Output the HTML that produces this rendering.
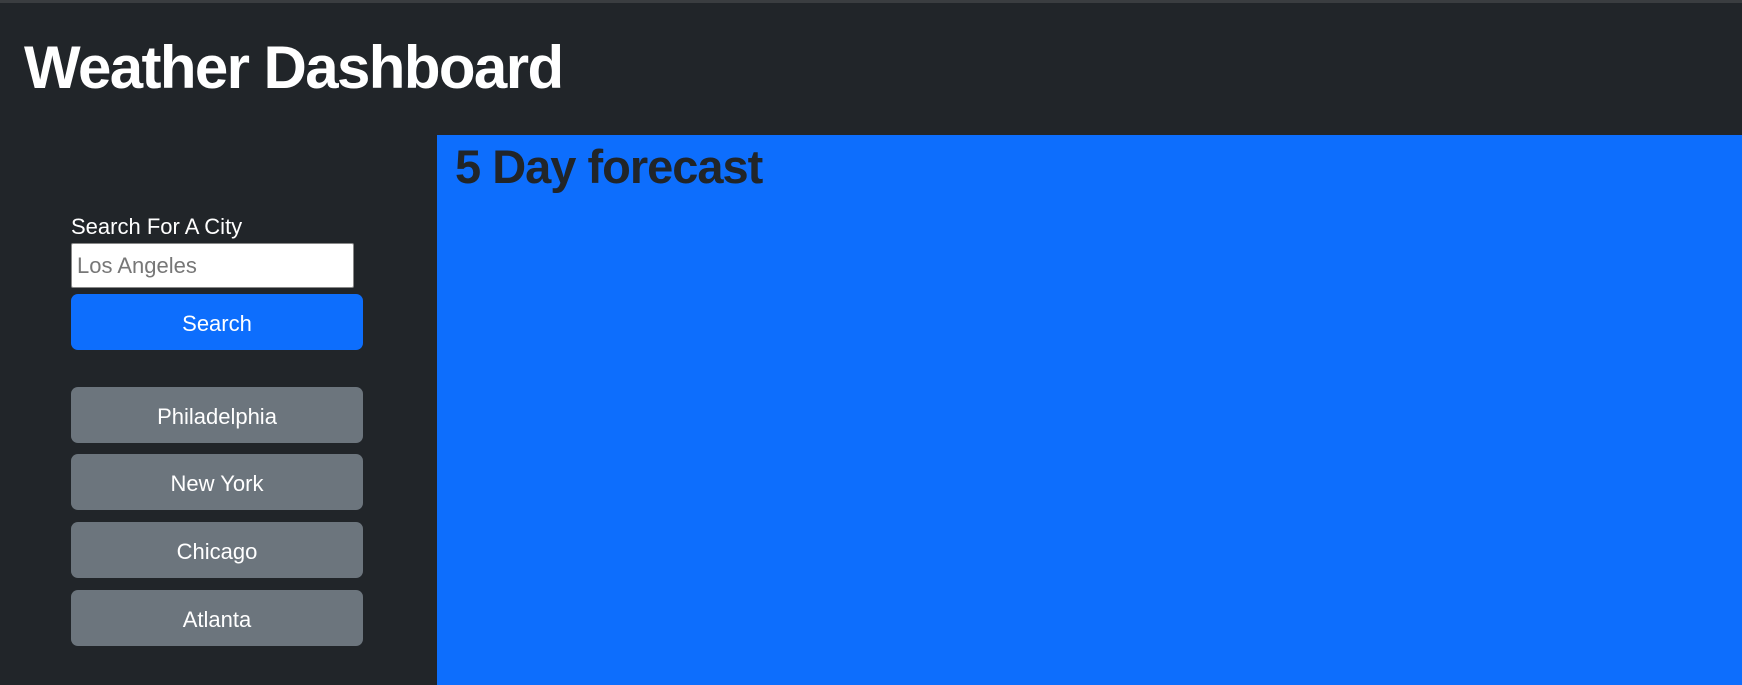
<!DOCTYPE html>
<html><head><style>
*{margin:0;padding:0;box-sizing:border-box}
body{width:1742px;height:685px;background:#212529;font-family:"Liberation Sans",sans-serif;overflow:hidden;position:relative;color:#fff}
.top{position:absolute;left:0;top:0;width:100%;height:3px;background:#3a3d40}
h1{position:absolute;left:24px;top:33px;font-size:60px;font-weight:bold;letter-spacing:-1.6px;white-space:nowrap}
.panel{position:absolute;left:437px;top:135px;right:0;bottom:0;background:#0d6efd}
.panel h2{position:absolute;left:18px;top:4px;font-size:47px;font-weight:bold;color:#212529;letter-spacing:-1px}
.lbl{position:absolute;left:71px;top:214px;font-size:22px}
.inp{position:absolute;left:71px;top:243px;width:283px;height:45px;background:#fff;border:1px solid #888;border-radius:2px;color:#777;font-size:22px;padding:9px 5px}
.btn{position:absolute;left:71px;width:292px;height:56px;border-radius:7px;font-size:22px;display:flex;align-items:center;justify-content:center;color:#fff;padding-top:4px}
.b{background:#0d6efd}.g{background:#6c757d}
</style></head><body>
<div class="top"></div>
<h1>Weather Dashboard</h1>
<div class="panel"><h2>5 Day forecast</h2></div>
<div class="lbl">Search For A City</div>
<div class="inp">Los Angeles</div>
<div class="btn b" style="top:294px">Search</div>
<div class="btn g" style="top:387px">Philadelphia</div>
<div class="btn g" style="top:454px">New York</div>
<div class="btn g" style="top:522px">Chicago</div>
<div class="btn g" style="top:590px">Atlanta</div>
</body></html>
